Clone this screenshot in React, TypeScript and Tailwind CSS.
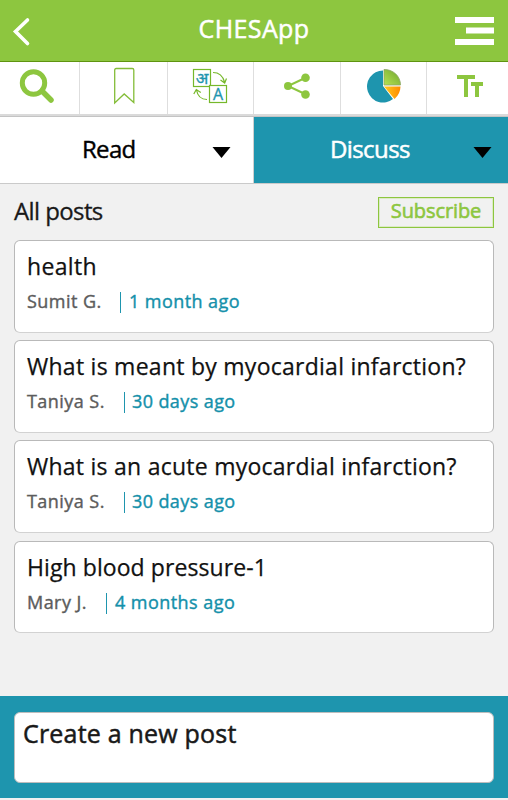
import React from 'react';

const posts = [
  { title: 'health', author: 'Sumit G.', time: '1 month ago', ts: 'tracking-[0.35px]', as: 'w-[93px]', tm: 'ml-2 tracking-[0.43px]', gap: 'h-[92.500px] mb-[7.500px]' },
  { title: 'What is meant by myocardial infarction?', author: 'Taniya S.', time: '30 days ago', ts: 'tracking-[0.26px]', as: 'w-[97px]', tm: 'ml-[7px] tracking-[0.4px]', gap: 'h-[92.500px] mb-[7.500px]' },
  { title: 'What is an acute myocardial infarction?', author: 'Taniya S.', time: '30 days ago', ts: 'tracking-[0.25px]', as: 'w-[97px]', tm: 'ml-[7px] tracking-[0.4px]', gap: 'h-[92.500px] mb-2' },
  { title: 'High blood pressure-1', author: 'Mary J.', time: '4 months ago', ts: 'tracking-[0.08px]', as: 'w-[79px]', tm: 'ml-2 tracking-[0.45px]', gap: 'h-[92.500px]' },
];

function Translate() {
  return (
    <svg className="overflow-visible" width="36" height="36" viewBox="0 0 36 36" fill="none" stroke="#76b82a" strokeWidth="1.2">
      <rect x="1.500" y=".5" width="17" height="17" />
      <rect x="17.500" y="16.500" width="17" height="17" fill="#fff" />
      <path d="M21 3.500c6 0 10 4 11.500 9.500M28.500 11l4.200 3 1.800-4.500" />
      <path d="M15 30.500c-6 0-9.500-4-10.500-9.500M1.800 25l2.500-4.500 4.500 3" />
      <text x="10" y="15" textAnchor="middle" fontSize="16.500" fill="#1e95ae" stroke="#1e95ae" strokeWidth="0.3" fontFamily="'Noto Sans', sans-serif">अ</text>
      <text x="26" y="31" textAnchor="middle" fontSize="16" fill="#1e95ae" stroke="#1e95ae" strokeWidth="0.3" fontFamily="'Open Sans', sans-serif">A</text>
    </svg>
  );
}

function Pie() {
  return (
    <svg width="36" height="36" viewBox="0 0 36 36">
      <defs>
        <linearGradient id="leaf" x1="0" y1="1" x2="1" y2="0"><stop offset="0" stopColor="#b5e253" /><stop offset="1" stopColor="#6fa52e" /></linearGradient>
        <linearGradient id="sun" x1="0" y1="0" x2="1" y2="0"><stop offset="0" stopColor="#ffcb1f" /><stop offset="1" stopColor="#ff8a00" /></linearGradient>
      </defs>
      <path d="M17 17V1.500A16 16 0 1 0 27 30Z" fill="#1e95ae" />
      <path d="M18 17.500 28.500 30A17 17 0 0 0 34.500 17.500Z" fill="url(#sun)" />
      <path d="M18 16V.5A16 15.500 0 0 1 34.500 16Z" fill="url(#leaf)" stroke="#8ba663" strokeWidth="0.8" />
    </svg>
  );
}

export default function App() {
  return (
    <div className="flex h-[800px] w-[508px] flex-col overflow-hidden bg-[#f1f1f1] font-['Open_Sans',sans-serif] text-black">
      <header className="flex h-[62px] shrink-0 items-start justify-between border-b border-[#5f9410] bg-[#8dc63f]">
        <svg className="mt-[17px] ml-[12px]" width="20" height="30" viewBox="0 0 20 30"><path d="M15.500 3 3.500 14.500 15.500 26.500" fill="none" stroke="#fff" strokeWidth="3.600" strokeLinecap="round" /></svg>
        <h1 className="mt-[10px] ml-[21px] text-[25px] leading-[36px] font-medium tracking-[0.4px] text-white [-webkit-text-stroke:0.5px]">CHESApp</h1>
        <svg className="mt-[17px] mr-[14px]" width="39" height="29" viewBox="0 0 39 29" fill="#fff"><path d="M0 0h39v6H0zM11 10.500h28v6H11zM0 22h39v6H0z" /></svg>
      </header>

      <nav className="grid h-[52px] shrink-0 grid-cols-[80px_87.500px_86.500px_87px_86px_81px] divide-x divide-[#dedede] bg-white">
        <div className="pt-[6px] pl-[19px]"><svg width="36" height="36" viewBox="0 0 36 36" fill="none" stroke="#8dc63f"><circle cx="14.500" cy="15" r="11.200" strokeWidth="5" /><path d="m23 23 9 9" strokeWidth="5.500" strokeLinecap="round" /></svg></div>
        <div className="pt-[5px] pl-[34px]"><svg width="21" height="38" viewBox="0 0 21 38"><path d="M.7 36V3Q.7 1.500 2.200 1.500H18.300Q19.800 1.500 19.800 3V35.500L10.200 27Z" fill="none" stroke="#84bd38" strokeWidth="1.300" /></svg></div>
        <div className="pt-[7px] pl-[24px]"><Translate /></div>
        <div className="pt-[11px] pl-[30px]"><svg width="27" height="28" viewBox="0 0 27 28" fill="#8dc63f"><path d="M21 5 4 13l17 8" fill="none" stroke="#8dc63f" strokeWidth="2" /><circle cx="4" cy="13" r="4" /><circle cx="21.500" cy="4.800" r="4.300" /><circle cx="21.500" cy="21.500" r="4.300" /></svg></div>
        <div className="pt-[7px] pl-[25px]"><Pie /></div>
        <div className="pt-[13px] pl-[30px]"><svg width="27" height="24" viewBox="0 0 27 24" fill="#8dc63f"><path d="M0 0h18v4h-7v18H7V4H0zM14 7h12v4h-4v11h-4V11h-4z" /></svg></div>
      </nav>
      <div className="h-[3px] shrink-0 border-b border-[#c4c4c4] bg-[#dadada]" />

      <div className="grid h-[67px] shrink-0 grid-cols-[254px_254px] border-b border-[#cacaca] bg-white">
        <div className="flex items-start justify-between border-r border-[#cfcfcf] pr-[22px] pl-[82px]">
          <span className="mt-[14px] text-[24px] leading-[36px] font-medium tracking-[-0.7px] [-webkit-text-stroke:0.4px]">Read</span>
          <svg className="mt-[29px]" width="19" height="13" viewBox="0 0 19 13"><path d="M.5 1h18L9.500 12z" /></svg>
        </div>
        <div className="flex items-start justify-between bg-[#1e95ae] pr-[16px] pl-[76px]">
          <span className="mt-[14px] text-[24px] leading-[36px] font-medium tracking-[-0.6px] text-white [-webkit-text-stroke:0.5px]">Discuss</span>
          <svg className="mt-[29px]" width="19" height="13" viewBox="0 0 19 13"><path d="M.5 1h18L9.500 12z" /></svg>
        </div>
      </div>

      <main className="flex-1 px-[14px]">
        <div className="flex h-[56px] items-start justify-between">
          <h2 className="mt-[10px] text-[24px] leading-[34px] font-medium tracking-[-0.6px] text-[#191919] [-webkit-text-stroke:0.3px]">All posts</h2>
          <button className="mt-[13px] flex h-[31px] w-[116px] justify-center border border-[#8dc63f] text-[20px] leading-[26px] font-medium tracking-[-0.1px] text-[#8dc63f] shadow-[inset_0_0_0_1px_#dcebc6] [-webkit-text-stroke:0.6px]"><span>Subscribe</span></button>
        </div>
        {posts.map((p) => (
          <article key={p.title} className={`rounded-[6px] border border-[#b9b9b9] border-b-[#d2d2d2] bg-white pt-[9px] pl-3 ${p.gap}`}>
            <h3 className={`text-[23px] leading-[32px] font-medium whitespace-nowrap text-[#111] [-webkit-text-stroke:0.25px] ${p.ts}`}>{p.title}</h3>
            <div className="flex items-start text-[18px] leading-[26px] font-medium tracking-[0.45px] whitespace-nowrap [-webkit-text-stroke:0.4px]">
              <span className={`mt-[6px] text-[#5c5c5c] ${p.as}`}>{p.author}</span>
              <span className="mt-[10px] h-[21px] w-px bg-[#1e95ae]" />
              <time className={`mt-[6px] text-[#1490aa] ${p.tm}`}>{p.time}</time>
            </div>
          </article>
        ))}
      </main>

      <footer className="h-[102px] shrink-0 bg-[#1e95ae] px-[14px] pt-[16px]">
        <div className="h-[71px] rounded-[6px] border border-[#bdbdbd] bg-white pt-[2px] pl-2 text-[25px] leading-[36px] font-medium tracking-[0.2px] text-[#191919] [-webkit-text-stroke:0.5px]">Create a new post</div>
      </footer>
      <div className="h-[2px] shrink-0 bg-[#f1f1f1]" />
    </div>
  );
}
